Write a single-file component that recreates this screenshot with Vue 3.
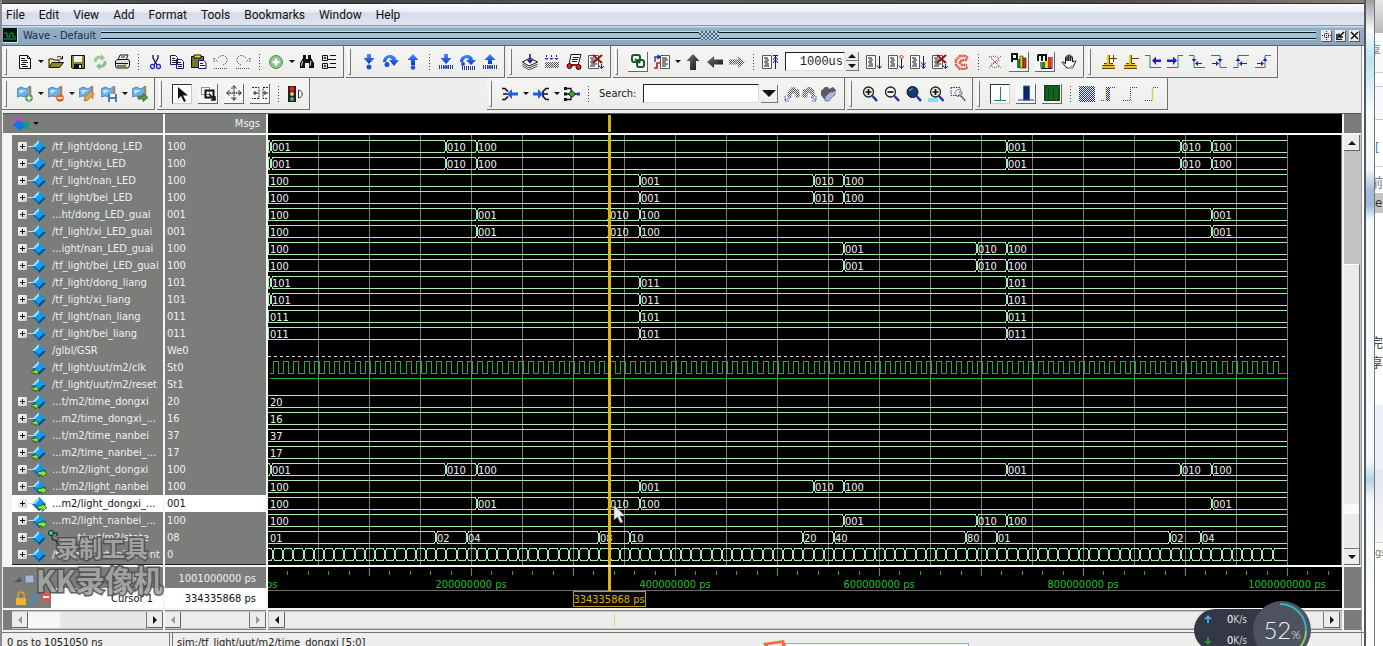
<template>
    <div class="desktop">
        <!-- Shared icon shapes -->
        <svg class="defs" width="0" height="0" aria-hidden="true">
            <defs>
                <pattern id="dots-blue" width="2" height="2" patternUnits="userSpaceOnUse"><path d="M0 0h1v1H0zM1 1h1v1H1z" fill="#1c2f78" /></pattern>
                <pattern id="dots-gray" width="2" height="2" patternUnits="userSpaceOnUse"><path d="M0 0h1v1H0zM1 1h1v1H1z" fill="#555" /></pattern>
                <linearGradient id="blue-arrow" x1="0" y1="0" x2="0" y2="1"><stop offset="0" stop-color="#4a90ff" /><stop offset="1" stop-color="#0a35c8" /></linearGradient>
                <linearGradient id="gray-arrow" x1="0" y1="0" x2="1" y2="1"><stop offset="0" stop-color="#777" /><stop offset="1" stop-color="#111" /></linearGradient>
            </defs>
            <symbol id="i-new" viewBox="0 0 16 16"><path d="M2.500 1.500h8l3 3v10h-11z" fill="#fff" stroke="#111" /><path d="M10.500 1.500v3h3" fill="none" stroke="#111" /><path d="M4 4.500h4M4 6.500h6M5 8.500h6M4 10.500h5M5 12.500h6" stroke="#111" /></symbol>
            <symbol id="i-open" viewBox="0 0 16 16"><path d="M1 13V5h4l1 1h5v3" fill="#fff27a" stroke="#111" /><path d="M1 13.500l3-5h11.500l-4 5z" fill="#8f8a1c" stroke="#111" /><path d="M9 3.500c2-2 4-1 5 1M14.500 2v3h-3" fill="none" stroke="#111" /></symbol>
            <symbol id="i-save" viewBox="0 0 16 16"><path d="M1.500 1.500h13v13h-12l-1-1z" fill="#8c8620" stroke="#111" /><path d="M4 2h8v6H4z" fill="#f3f3ee" /><path d="M4 10h8v4.500H4z" fill="#111" /><path d="M9 11h2v3H9z" fill="#eee" /></symbol>
            <symbol id="i-reload" viewBox="0 0 16 16"><path d="M2 8c-1-4 3-7 7-6V0l4 4-4 3V5C6 4 4 6 5 8z" fill="#9cc99a" /><path d="M14 7c2 4-2 7-6 7v2l-4-4 4-3v2c3 0 4-2 3-4z" fill="#8bbd8b" /></symbol>
            <symbol id="i-print" viewBox="0 0 16 16"><path d="M4 6l2-5h8l-2 5" fill="#fff" stroke="#111" /><path d="M1.500 7l2-1.500h11l1 1.500v5l-1.500 2H2.500l-1-2z" fill="#ddd" stroke="#111" /><path d="M2 9.500h12M3 12h9M7 3h4" stroke="#111" /><path d="M10 10.500h2" stroke="#d8c800" /></symbol>
            <symbol id="i-cut" viewBox="0 0 16 16"><path d="M6 1v3l4 7M11 1v3l-4 7" fill="none" stroke="#1a1a60" stroke-width="1.400" /><circle cx="5.500" cy="12.500" r="2" fill="none" stroke="#2a2ad0" stroke-width="1.300" /><circle cx="11.500" cy="12.500" r="2" fill="none" stroke="#2a2ad0" stroke-width="1.300" /></symbol>
            <symbol id="i-copy" viewBox="0 0 16 16"><path d="M1.500 1.500h5l2 2v7h-7zM7.500 5.500h5l2 2v7h-7z" fill="#fff" stroke="#15157a" /><path d="M3 4.500h3M3 6.500h4M3 8.500h4M9 8.500h3M9 10.500h4M9 12.500h4" stroke="#111" /></symbol>
            <symbol id="i-paste" viewBox="0 0 16 16"><path d="M.5 2.500h12v11H.5z" fill="#77713a" stroke="#111" /><path d="M3 1h7v3H3z" fill="#e8d84a" stroke="#111" /><path d="M7.500 6.500h5l2.500 2v6H7.500z" fill="#fff" stroke="#15157a" /><path d="M9 9.500h3M9 11.500h5" stroke="#15157a" /></symbol>
            <symbol id="i-undo" viewBox="0 0 16 16"><path d="M1 4l4 4M1 8V4M5 4c3-4 9-3 9 2 0 3-2 4-4 5" fill="none" stroke="#555" stroke-dasharray="1.500 1" /><path d="M1 14.500h14" stroke="#555" stroke-dasharray="1 1" /></symbol>
            <symbol id="i-redo" viewBox="0 0 16 16"><path d="M15 4l-4 4M15 8V4M11 4C8 0 2 1 2 6c0 3 2 4 4 5" fill="none" stroke="#555" stroke-dasharray="1.500 1" /><path d="M1 14.500h14" stroke="#555" stroke-dasharray="1 1" /></symbol>
            <symbol id="i-add" viewBox="0 0 16 16"><circle cx="8" cy="8" r="6.500" fill="#8cc587" stroke="#558f54" /><path d="M8 4.500v7M4.500 8h7" stroke="#fff" stroke-width="2.500" /></symbol>
            <symbol id="i-find" viewBox="0 0 16 16"><path d="M4 1h3v4h2V1h3v3l3 5v5h-5V9H6v5H1V9l3-5z" fill="#111" /><path d="M3.500 7L2.500 12M12 7l-1 5" stroke="#ddd" /></symbol>
            <symbol id="i-tree" viewBox="0 0 16 16"><path d="M1.500 1.500h5v5h-5zM1.500 9.500h5v5h-5z" fill="#fff" stroke="#111" /><path d="M2.500 4h3M4 2.500v3M2.500 12h3M4 10.500v3M9 1.500h6M7 5.500h8M9 9.500h6M7 13.500h8" stroke="#111" /></symbol>
            <symbol id="i-step-in" viewBox="0 0 16 16"><path d="M6 0h4v4h3.500L8 10 2.500 4H6z" fill="url(#blue-arrow)" /><circle cx="8" cy="13" r="2.500" fill="#1c4fe0" /></symbol>
            <symbol id="i-step-over" viewBox="0 0 16 16"><path d="M0 8C0-1 13-1 13 6h3l-5 6-5-6h3c-1-3-5-3-6 2z" fill="url(#blue-arrow)" /><circle cx="4" cy="10.500" r="2.500" fill="#1c4fe0" /></symbol>
            <symbol id="i-step-out" viewBox="0 0 16 16"><path d="M8 0l5.500 6H10v5H6V6H2.500z" fill="url(#blue-arrow)" /><circle cx="8" cy="13.500" r="2.300" fill="#1c4fe0" /></symbol>
            <symbol id="i-step-in-now" viewBox="0 0 16 16"><path d="M6 0h4v4h3.500L8 10 2.500 4H6z" fill="url(#blue-arrow)" /><path d="M1.500 11v4M3.500 11v4M5.500 11v4M10.500 11v4M12.500 11v4M14.500 11v4" stroke="#223a9a" /><circle cx="8" cy="13" r="2" fill="#1c4fe0" /></symbol>
            <symbol id="i-step-over-now" viewBox="0 0 16 16"><path d="M0 8C0-1 13-1 13 6h3l-5 5-5-5h3c-1-3-5-3-6 2z" fill="url(#blue-arrow)" /><circle cx="3" cy="10" r="2" fill="#1c4fe0" /><path d="M2.500 12v4M4.500 12v4M6.500 12v4M8.500 12v4M10.500 12v4M12.500 12v4M14.500 12v4" stroke="#223a9a" /></symbol>
            <symbol id="i-step-out-now" viewBox="0 0 16 16"><path d="M8 0l5.500 6H10v4H6V6H2.500z" fill="url(#blue-arrow)" /><path d="M1.500 11v4M3.500 11v4M5.500 11v4M10.500 11v4M12.500 11v4M14.500 11v4" stroke="#223a9a" /><circle cx="8" cy="13" r="2" fill="#1c4fe0" /></symbol>
            <symbol id="i-layers" viewBox="0 0 16 16"><path d="M.5 8L8 4l7.500 4L7 12z" fill="#fff" stroke="#111" /><path d="M.5 10L7 14l8.500-4M.5 12L7 16l8.500-4" fill="none" stroke="#222" stroke-width=".8" /><path d="M8 0v8M5.500 5.500L8 8.500l2.500-3" fill="none" stroke="#15158a" stroke-width="1.500" /></symbol>
            <symbol id="i-grid-down" viewBox="0 0 16 16"><path d="M2.500 1v4M7.500 1v4M12.500 1v4M1 4l1.500 2L4 4M6 4l1.500 2L9 4M11 4l1.500 2L14 4" stroke="#2424a0" fill="none" stroke-dasharray="2 1" /><path d="M1 8h14v6H1z" fill="url(#dots-gray)" /></symbol>
            <symbol id="i-profile" viewBox="0 0 16 16"><path d="M5 .5h10l-3 11H3z" fill="#fff" stroke="#111" /><path d="M7 3.500h6M6 5.500h6M6 7.500h5" stroke="#111" /><path d="M4 11h8" stroke="#a01010" stroke-width="2" /><circle cx="3.500" cy="12" r="2.500" fill="#e02020" stroke="#111" /><circle cx="12.500" cy="13" r="2.500" fill="#e02020" stroke="#111" /></symbol>
            <symbol id="i-doc-x" viewBox="0 0 16 16"><path d="M.5 1.500h10v13H.5z" fill="#fff" stroke="#555" /><path d="M2 4h4M3 6h6M2 8h4M3 10h6M2 12h5" stroke="#111" /><path d="M5 1l9 8M14 1L5 9" stroke="#8f1414" stroke-width="2" /><path d="M13.500 10v4M11 12l2.500 2.500L16 12" fill="none" stroke="#15158a" /></symbol>
            <symbol id="i-link" viewBox="0 0 16 16"><rect x="2" y="2" width="8" height="7" rx="2" fill="none" stroke="#175a2c" stroke-width="2" /><rect x="7" y="7" width="7" height="7" rx="2" fill="none" stroke="#175a2c" stroke-width="2" /><path d="M5 6l5 4" stroke="#175a2c" stroke-width="2" /></symbol>
            <symbol id="i-restart" viewBox="0 0 16 16"><path d="M6.500 1.500h9v13h-9z" fill="#fff" stroke="#555" /><path d="M8 4h5M8 6h6M8 8h4M8 10h6M8 12h4" stroke="#111" /><path d="M0 14h3V9h3" fill="none" stroke="#c02020" stroke-width="1.700" /><path d="M1 8V3h4M3.500 1L6 3 3.500 5" fill="none" stroke="#2222b0" stroke-width="1.300" /></symbol>
            <symbol id="i-up" viewBox="0 0 16 16"><path d="M8 0l6.500 7H11v9H5V7H1.500z" fill="url(#gray-arrow)" /></symbol>
            <symbol id="i-left" viewBox="0 0 16 16"><path d="M0 8l7-6v3.500h9v5H7V14z" fill="url(#gray-arrow)" /></symbol>
            <symbol id="i-right" viewBox="0 0 16 16"><path d="M16 8L9 2v3.500H0v5h9V14z" fill="url(#dots-gray)" /></symbol>
            <symbol id="i-doc-up" viewBox="0 0 16 16"><path d="M.5 1.500h9v13h-9z" fill="#fff" stroke="#555" /><path d="M2 4h4M3 6h4M2 8h4M3 10h4M2 12h5" stroke="#111" /><path d="M13.500 2v13M11 6l2.500-3L16 6M11 9l2.500-3L16 9M11 1.500h5" fill="none" stroke="#15158a" /></symbol>
            <symbol id="i-doc-down" viewBox="0 0 16 16"><path d="M.5 1.500h9v13h-9z" fill="#fff" stroke="#555" /><path d="M2 4h4M3 6h4M2 8h4M3 10h4M2 12h5" stroke="#111" /><path d="M13.500 2v12M11 11.500l2.500 3 2.500-3" fill="none" stroke="#15158a" /></symbol>
            <symbol id="i-doc-step" viewBox="0 0 16 16"><path d="M.5 1.500h9v13h-9z" fill="#fff" stroke="#555" /><path d="M2 4h4M3 6h4M2 8h4M3 10h4M2 12h5" stroke="#111" /><path d="M13.500 5v9M11 11.500l2.500 3 2.500-3" fill="none" stroke="#15158a" /><path d="M13.500 1l2 2-2 2-2-2z" fill="none" stroke="#d02020" /></symbol>
            <symbol id="i-doc-all" viewBox="0 0 16 16"><path d="M.5 1.500h9v13h-9z" fill="#fff" stroke="#555" /><path d="M2 4h4M3 6h4M2 8h4M3 10h4M2 12h5" stroke="#111" /><path d="M13.500 2v12M11 8.500l2.500 3 2.500-3M11 11.500l2.500 3 2.500-3" fill="none" stroke="#15158a" /></symbol>
            <symbol id="i-stop" viewBox="0 0 16 16"><path d="M14 4L11 2H6L2 6v5l4 4h5l3-2M13 6H8L6 8v1l2 2h5" fill="none" stroke="#e05040" stroke-width="2.500" stroke-dasharray="2 .6" /></symbol>
            <symbol id="i-trace-off" viewBox="0 0 16 16"><path d="M4 3c4-2 8 0 8 3s-8 2-8 5 5 3 8 1" fill="none" stroke="#555" stroke-dasharray="1 1" /><path d="M2 2l12 12M14 2L2 14" stroke="#b04040" stroke-dasharray="1.500 1" /></symbol>
            <symbol id="i-perf" viewBox="0 0 16 16"><path d="M6 6h3v9H6z" fill="#1c8a2a" /><path d="M9 3h3v12H9z" fill="#f0d020" stroke="#111" stroke-width=".6" /><path d="M12 5h3v10h-3z" fill="#d83018" stroke="#111" stroke-width=".6" /><path d="M1 9V1h5v5H1" fill="#fff" stroke="#111" stroke-width="2" /></symbol>
            <symbol id="i-mem" viewBox="0 0 16 16"><path d="M5 9h3v6H5z" fill="#1c8a2a" /><path d="M8 8h3v7H8z" fill="#f0d020" /><path d="M11 4h3v11h-3z" fill="#d83018" /><path d="M1 8V1.500M1 2h8v6M5 2v6" fill="none" stroke="#111" stroke-width="2" /><path d="M4 15.500h11V4M4 9v6" fill="none" stroke="#111" /></symbol>
            <symbol id="i-hand" viewBox="0 0 16 16"><path d="M4.500 10V3.500c0-1 1.500-1 1.500 0V7 2c0-1 1.800-1 1.800 0v5V1.500c0-1 1.800-1 1.800 0V7l.4-4c.3-1 1.500-.8 1.500.3L11.500 8l2-1c1-.6 1.500.2 1 1L11.500 14H6l-4.500-5C1 8 2 7.500 3 8z" fill="#fff" stroke="#111" /><path d="M6 15l6 0-1-4z" fill="#9aa8d0" /></symbol>
            <symbol id="i-cur-add" viewBox="0 0 16 16"><path d="M6 1h3v8h3v3h2v3H1v-3h2V9h3z" fill="#f0c020" /><path d="M1 14.500h13M3 9.500h3M8.500 1v8.500H12M1.500 11.500h12" fill="none" stroke="#5a4400" /><path d="M9 4.500h7M12.500 1v7" stroke="#5a4400" /></symbol>
            <symbol id="i-cur-del" viewBox="0 0 16 16"><path d="M6 1h3v8h3v3h2v3H1v-3h2V9h3z" fill="#f0c020" /><path d="M1 14.500h13M3 9.500h3M8.500 1v8.500H12M1.500 11.500h12" fill="none" stroke="#5a4400" /><path d="M9 4.500h7" stroke="#5a4400" /></symbol>
            <symbol id="i-edge-prev" viewBox="0 0 16 16"><path d="M0 1.500h5v12h11" fill="none" stroke="#2a8070" /><path d="M7 6.500l4-4v3h5v2.500h-5v3z" fill="#2a18c0" /></symbol>
            <symbol id="i-edge-next" viewBox="0 0 16 16"><path d="M0 13.500h11v-12h5" fill="none" stroke="#2a8070" /><path d="M10 6.500l-4-4v3H0v2.500h6v3z" fill="#2a18c0" /></symbol>
            <symbol id="i-fall-prev" viewBox="0 0 16 16"><path d="M0 1.500h5v12h11" fill="none" stroke="#2a8070" /><path d="M2.500 5h5L5 8zM6 9.500L9 7v5zM9 9h4v1H9z" fill="#2a18c0" /></symbol>
            <symbol id="i-fall-next" viewBox="0 0 16 16"><path d="M0 1.500h9v12h7" fill="none" stroke="#2a8070" /><path d="M6.500 5h5L9 8zM8 9.500L5 7v5zM1 9h4v1H1z" fill="#2a18c0" /></symbol>
            <symbol id="i-rise-prev" viewBox="0 0 16 16"><path d="M0 13.500h5v-12h11" fill="none" stroke="#2a8070" /><path d="M2.500 7h5L5 4zM6 9.500L9 7v5zM9 9h5v1H9z" fill="#2a18c0" /></symbol>
            <symbol id="i-rise-next" viewBox="0 0 16 16"><path d="M0 13.500h10v-12h6" fill="none" stroke="#2a8070" /><path d="M7.500 7h5L10 4zM9 9.500L6 7v5zM2 9h4v1H2z" fill="#2a18c0" /></symbol>
            <symbol id="i-flag" viewBox="0 0 16 16"><path d="M0 3l4-2 5 2 4-3v10l-4 1-5-1-4 1z" fill="#6cb0e4" stroke="#3a78b8" stroke-width=".8" /><path d="M2 4l7 0-6 4z" fill="#c4e2f8" /><path d="M13.500 0v13" stroke="#c87a30" stroke-width="1.500" /></symbol>
            <symbol id="i-bm-add" viewBox="0 0 16 16"><use href="#i-flag" /><circle cx="12" cy="12" r="3.800" fill="#5a9a48" /><path d="M12 9.500v5M9.500 12h5" stroke="#fff" stroke-width="1.500" /></symbol>
            <symbol id="i-bm-del" viewBox="0 0 16 16"><use href="#i-flag" /><circle cx="12" cy="12" r="3.800" fill="#e06428" /><path d="M9.500 12h5" stroke="#fff" stroke-width="1.500" /></symbol>
            <symbol id="i-bm-edit" viewBox="0 0 16 16"><use href="#i-flag" /><path d="M5 15l1-4 6-6 3 3-6 6z" fill="#e8a848" stroke="#a86a20" stroke-width=".8" /></symbol>
            <symbol id="i-bm-save" viewBox="0 0 16 16"><use href="#i-flag" /><path d="M7 8h9v8H7z" fill="#4a78b8" /><path d="M9 8h5v3H9zM9 13h5v3H9z" fill="#fff" /></symbol>
            <symbol id="i-bm-go" viewBox="0 0 16 16"><use href="#i-flag" /><path d="M6 10h5V7.500l5 4-5 4V13H6z" fill="#5c9450" stroke="#35682c" stroke-width=".8" /></symbol>
            <symbol id="i-pointer" viewBox="0 0 16 16"><path d="M4 1v12l3-3 3 6 2-1-3-5.500h5z" fill="#111" /></symbol>
            <symbol id="i-select" viewBox="0 0 16 16"><path d="M1.500 2.500h8v7h-8z" fill="none" stroke="#333" stroke-dasharray="1 1" /><path d="M5.500 5.500h8v7h-8z" fill="none" stroke="#111" stroke-width="2" /><path d="M9 9l6 6M15 11v4h-4" fill="none" stroke="#111" stroke-width="1.500" /></symbol>
            <symbol id="i-move" viewBox="0 0 16 16"><path d="M8 1v14M1 8h14M5.500 3.500L8 1l2.500 2.500M5.500 12.500L8 15l2.500-2.500M3.500 5.500L1 8l2.500 2.500M12.500 5.500L15 8l-2.500 2.500" fill="none" stroke="#333" stroke-width="1.300" stroke-dasharray="1.500 .7" /></symbol>
            <symbol id="i-edges" viewBox="0 0 16 16"><path d="M0 2.500h7v11H0M16 2.500h-5v11h5" fill="none" stroke="#222" stroke-dasharray="2 1" /><path d="M1 8h5M3 6v4M11 8h5M13 6v4" stroke="#222" /></symbol>
            <symbol id="i-traffic" viewBox="0 0 16 16"><path d="M1 0h8v16H1z" fill="#222" /><circle cx="5" cy="3" r="2.500" fill="#f01818" /><circle cx="5" cy="8" r="2" fill="#e0c860" /><circle cx="5" cy="13" r="2" fill="#58b078" /><path d="M11.500 4v8c5-1 5-7 0-8z" fill="#fff" stroke="#333" /></symbol>
            <symbol id="i-merge-out" viewBox="0 0 16 16"><path d="M0 2.500h3l3 3M0 13.500h3l3-3M1 8h5" fill="none" stroke="#111" stroke-width="1.700" /><path d="M5 8l5-5v3.500h6v3h-6V13z" fill="#1c60e0" /></symbol>
            <symbol id="i-merge-in" viewBox="0 0 16 16"><path d="M16 2.500h-3l-3 3v5l3 3h3M11 8h4" fill="none" stroke="#111" stroke-width="1.700" /><path d="M10 8L5 3v3.500H0v3h5V13z" fill="#1c60e0" /></symbol>
            <symbol id="i-junction" viewBox="0 0 16 16"><path d="M1 2.500h6v3M1 13.500h6v-3M0 8h16" fill="none" stroke="#111" stroke-width="1.300" /><path d="M8 4.500L11.500 8 8 11.500 4.500 8z" fill="#28b028" stroke="#111" /><path d="M0 1h3v3H0zM0 6.500h3v3H0zM0 12h3v3H0z" fill="#111" /><path d="M13 6.500h3v3h-3z" fill="#2040e0" /></symbol>
            <symbol id="i-find-prev" viewBox="0 0 16 16"><path d="M3 10l2-6 3-3h3l1 2h3l1 8-4 1-1-5-3 1-1 4-3-1z" fill="url(#dots-gray)" /><path d="M1 14l6-3M1 10v5h5" fill="none" stroke="#2c3cc0" stroke-dasharray="1.500 1" /></symbol>
            <symbol id="i-find-next" viewBox="0 0 16 16"><path d="M1 11l1-8h3l1-2h3l4 3 1 6-3 2-1-4-3-1-1 5z" fill="url(#dots-gray)" /><path d="M10 11l5 3M15 10v5h-5" fill="none" stroke="#2c3cc0" stroke-dasharray="1.500 1" /></symbol>
            <symbol id="i-find-opt" viewBox="0 0 16 16"><path d="M1 5l4-4h3l1 2 4-2 3 3-2 5-4-1-2 5H4L1 9z" fill="#5c5c5c" /><path d="M5 15l0-4 5-5 3 0 2-2 0 5-4 3-2 3z" fill="#a8b8e0" stroke="#555" stroke-width=".6" /></symbol>
            <symbol id="i-zoom-in" viewBox="0 0 16 16"><circle cx="6.500" cy="6" r="5" fill="#dff2dc" stroke="#222" stroke-width="1.300" /><path d="M6.500 3v6M3.500 6h6" stroke="#111" stroke-width="1.700" /><path d="M10.500 10l4.500 5" stroke="#2030b8" stroke-width="2.500" /></symbol>
            <symbol id="i-zoom-out" viewBox="0 0 16 16"><circle cx="6.500" cy="6" r="5" fill="#f4f8f4" stroke="#222" stroke-width="1.300" /><path d="M3.500 6h6" stroke="#111" stroke-width="1.700" /><path d="M10.500 10l4.500 5" stroke="#2030b8" stroke-width="2.500" /></symbol>
            <symbol id="i-zoom-full" viewBox="0 0 16 16"><circle cx="6.500" cy="6" r="5.500" fill="#163a78" stroke="#111" /><path d="M3.500 5c1-2 2-2 3-2" stroke="#a8c8e8" fill="none" /><path d="M10.500 10l4.500 5" stroke="#2030b8" stroke-width="2.500" /></symbol>
            <symbol id="i-zoom-cur" viewBox="0 0 16 16"><path d="M0 12h10v4H0z" fill="#80e0f0" /><circle cx="7.500" cy="6" r="5" fill="#dff2dc" stroke="#222" stroke-width="1.300" /><path d="M7.500 3v6M4.500 6h6" stroke="#111" stroke-width="1.700" /><path d="M11 10l4.500 5" stroke="#2030b8" stroke-width="2.500" /></symbol>
            <symbol id="i-zoom-sel" viewBox="0 0 16 16"><path d="M1 1.500h9v8H1z" fill="none" stroke="#2030b8" stroke-dasharray="1.500 1" /><circle cx="8.500" cy="7" r="3.500" fill="none" stroke="#444" stroke-dasharray="1.500 1" /><path d="M11 10l4.500 5" stroke="#404070" stroke-width="2" stroke-dasharray="1.500 .8" /></symbol>
            <symbol id="i-wave-line" viewBox="0 0 16 16"><path d="M8.500 1v14M2 14.500h12" stroke="#28806c" /></symbol>
            <symbol id="i-wave-blue" viewBox="0 0 16 16"><path d="M5.500 1h6v14h-6z" fill="#14206a" stroke="#28806c" /><path d="M0 15h16" stroke="#2030b8" /></symbol>
            <symbol id="i-wave-green" viewBox="0 0 16 16"><path d="M0 0h16v16H0z" fill="#0a4a14" /><path d="M1 14h2V2h3v12h2V2h3v12h2V2h2" fill="none" stroke="#1e7a30" /></symbol>
            <symbol id="i-fill" viewBox="0 0 16 16"><path d="M0 0h16v16H0z" fill="url(#dots-blue)" /></symbol>
            <symbol id="i-edge-fill" viewBox="0 0 16 16"><path d="M5 1h4v14H5z" fill="url(#dots-blue)" /><path d="M0 14.500h5M9 1.500h6" stroke="#444" stroke-dasharray="1 1" /><path d="M4.500 3v12" stroke="#e8e070" /></symbol>
            <symbol id="i-edge-dot" viewBox="0 0 16 16"><path d="M0 14.500h7.500v-13H14" fill="none" stroke="#444" stroke-dasharray="1 1" /></symbol>
            <symbol id="i-edge-yellow" viewBox="0 0 16 16"><path d="M0 14.500h7M8 1.500h6" fill="none" stroke="#444" stroke-dasharray="1 1" /><path d="M7.500 2v13" stroke="#d8d040" stroke-width="1.500" /></symbol>
            <symbol id="i-signal" viewBox="0 0 16 16"><path d="M8 1l7 7-7 7-7-7z" fill="#10a0f0" /><path d="M8 1L1 8h3l4-4z" fill="#9fe0ff" /><path d="M8 1l7 7h-3L8 4z" fill="#2090d8" /><path d="M15 8l-7 7v-3l4-4z" fill="#0c4880" /><path d="M1 8l7 7v-3L4 8z" fill="#1070b8" /></symbol>
            <symbol id="i-signal-in" viewBox="0 0 16 16"><use href="#i-signal" /><path d="M1 10.500h3V8.500L8 12l-4 3v-2H1z" fill="#8ee048" stroke="#1e5a10" stroke-width=".8" /></symbol>
            <symbol id="i-signal-out" viewBox="0 0 16 16"><use href="#i-signal" /><path d="M7 9.500h4V7.500l5 4-5 4v-2.500H7z" fill="#8ee048" stroke="#1e5a10" stroke-width=".8" /></symbol>
        </svg>

        <main class="window">
            <div class="glass-top"></div>
            <nav class="menubar">
                <a v-for="m in menus" :key="m" href="#" class="menu">{{ m }}</a>
            </nav>

            <header class="titlebar">
                <svg class="title-icon" width="14" height="14" viewBox="0 0 14 14"><path d="M0 0h14v14H0z" fill="#06140c" /><path d="M1 5h3v4h3V5M8 5h2v4h3M1 11h12" fill="none" stroke="#18a060" /></svg>
                <h1>Wave - Default</h1>
                <div class="stripes"><span class="stripe-grip"></span></div>
                <button class="title-btn" aria-label="Zoom window"><svg width="9" height="9" viewBox="0 0 9 9"><path d="M4.500 0v9M0 4.500h9M2.500 2.500h4v4h-4z" fill="none" stroke="#222" stroke-dasharray="1 1" /></svg></button>
                <button class="title-btn" aria-label="Undock"><svg width="9" height="9" viewBox="0 0 9 9"><path d="M1 3v5.500h5M8 1L3.500 5.500M3 2.500v3.500h4" fill="none" stroke="#111" stroke-width="1.600" /></svg></button>
                <button class="title-btn" aria-label="Close"><svg width="9" height="9" viewBox="0 0 9 9"><path d="M1 1l7 7M8 1L1 8" stroke="#111" stroke-width="1.600" /></svg></button>
            </header>

            <!-- Toolbars -->
            <div v-for="(row, r) in toolbars" :key="r" class="toolbar-row">
                <div v-for="bar in row" :key="bar.id" class="toolbar" :class="bar.id">
                    <span class="grip"></span>
                    <template v-for="(item, i) in bar.items" :key="i">
                        <span v-if="item === '|'" class="sep"></span>
                        <button v-else-if="item === 'v'" class="caret" aria-label="More"></button>
                        <div v-else-if="item === 'runlength'" class="run-length">
                            <input v-model="runLength" type="text" aria-label="Run length" />
                            <div class="spin">
                                <button aria-label="Increase"><i class="tri up"></i></button>
                                <button aria-label="Decrease"><i class="tri down"></i></button>
                            </div>
                        </div>
                        <div v-else-if="item === 'search'" class="search">
                            <label for="wave-search">Search:</label>
                            <input id="wave-search" v-model="search" type="text" />
                            <button class="drop" aria-label="Search history"><i class="tri down big"></i></button>
                        </div>
                        <button v-else class="tool" :class="item.kind" :aria-label="item.icon || item">
                            <svg width="16" height="16"><use :href="'#i-' + (item.icon || item)" /></svg>
                        </button>
                    </template>
                </div>
            </div>

            <!-- Wave panes -->
            <section class="panes">
                <div class="head names-head">
                    <svg width="18" height="16" viewBox="0 0 18 16"><path d="M2 5l6-4 4 5-5 4z" fill="none" stroke="#d040d8" stroke-width="2" /><path d="M9 5h8v8H9z" fill="#1c9a70" /><path d="M1 9l5-5 7 6-5 5z" fill="#1870f0" /></svg>
                    <button class="caret" aria-label="Columns"></button>
                </div>
                <div class="head msgs-head">Msgs</div>
                <div class="head wave-head"><svg width="100%" height="19"><rect :x="cursorX - 1" y="1" width="3" height="17" fill="#c8b018" /></svg></div>
                <div class="head"></div>

                <ul class="names">
                    <li v-for="(s, i) in signals" :key="i" :class="{ selected: i === selected }">
                        <button v-if="s.bus" class="expand" aria-label="Expand"></button>
                        <span v-else class="no-expand"></span>
                        <svg class="sig-icon" width="16" height="16"><use :href="'#i-signal' + (s.dir ? '-' + s.dir : '')" /></svg>
                        <svg v-if="s.fsm" class="fsm" width="14" height="15" viewBox="0 0 14 15"><path d="M4 3h5v3M4 5v4l6 3" fill="none" stroke="#111" /><circle cx="3" cy="3" r="2.500" fill="#30d8d8" stroke="#111" /><circle cx="11" cy="12" r="2.500" fill="#30d8d8" stroke="#111" /></svg>
                        <span class="sig-name">{{ s.name }}</span>
                    </li>
                </ul>
                <ul class="values">
                    <li v-for="(s, i) in signals" :key="i" :class="{ selected: i === selected }">{{ s.value }}</li>
                </ul>
                <div class="waves">
                    <svg width="100%" height="430" shape-rendering="crispEdges">
                        <path :d="gridPath" stroke="#7c7c7c" fill="none" />
                        <path :d="busPath" stroke="#aeeab0" fill="none" />
                        <path d="M0 221.500H1019" stroke="#dcdcdc" stroke-dasharray="3 3" />
                        <path :d="clockPath" stroke="#1fae2c" fill="none" />
                        <path d="M2 243.500H1019" stroke="#1fae2c" />
                        <text v-for="(l, i) in labels" :key="i" :x="l.x" :y="l.y" class="bus-label">{{ l.text }}</text>
                        <rect :x="cursorX - 1" y="0" width="3" height="430" fill="#dcb414" />
                    </svg>
                    <svg class="mouse" width="13" height="20" viewBox="0 0 13 20"><path d="M1 1v15l3.500-3 3 6 2.500-1-3-6h5z" fill="#eceaf0" stroke="#777" stroke-width=".6" /></svg>
                </div>
                <div class="vscroll">
                    <button class="sb" aria-label="Scroll up"><i class="tri up"></i></button>
                    <div class="vtrack"></div>
                    <div class="vthumb"></div>
                    <button class="sb" aria-label="Scroll down"><i class="tri down"></i></button>
                </div>

                <div class="foot names-foot">
                    <div class="foot-row now">
                        <svg width="40" height="16" viewBox="0 0 40 16"><path d="M0 11h9l-2-5-3 3z" fill="#444" /><path d="M12 4h9v8h-9z" fill="#bcd0f0" stroke="#5070b0" /><circle cx="31" cy="9" r="4" fill="#88b488" /></svg>
                        <span>Now</span>
                    </div>
                    <div class="foot-row cursor">
                        <svg width="40" height="16" viewBox="0 0 40 16"><path d="M5 8V5c0-4 6-4 6 0v3" fill="none" stroke="#d8a030" stroke-width="1.500" /><path d="M3 8h10v7H3z" fill="#f0b040" /><path d="M15 14l6-7c0-3 2-5 4-4l-2 2 1 2 2-1c0 3-2 3-4 3l-5 6z" fill="#4a88d0" /><circle cx="33" cy="7" r="5" fill="#e05848" /><path d="M30 7h6" stroke="#fff" stroke-width="2" /></svg>
                        <span>Cursor 1</span>
                    </div>
                </div>
                <div class="foot values-foot">
                    <div class="foot-row now">1001000000 ps</div>
                    <div class="foot-row cursor">334335868 ps</div>
                </div>
                <div class="foot timeline">
                    <svg width="100%" height="41">
                        <g shape-rendering="crispEdges">
                            <path :d="tickPath" stroke="#18b428" fill="none" />
                            <path d="M0 23.500H1072" stroke="#6c6c6c" />
                            <rect :x="cursorX - 1" y="0" width="3" height="24" fill="#dcb414" />
                            <rect x="305.500" y="24.500" width="72" height="15" fill="#0c0a00" stroke="#b8a018" />
                        </g>
                        <text v-for="t in times" :key="t.text" :x="t.x" y="21" class="time-label">{{ t.text }}</text>
                        <text :x="cursorX" y="36" class="cursor-label">334335868 ps</text>
                    </svg>
                </div>
                <div class="foot"></div>

                <div v-for="bar in hbars" :key="bar" class="hscroll" :class="bar">
                    <button class="sb" aria-label="Scroll left"><i class="tri left"></i></button>
                    <div class="hthumb"></div>
                    <button class="sb" aria-label="Scroll right"><i class="tri right"></i></button>
                </div>
                <div class="head"></div>
            </section>

            <footer class="status">
                <span class="range">0 ps to 1051050 ns</span>
                <span class="path">sim:/tf_light/uut/m2/time_dongxi [5:0]</span>
            </footer>
        </main>

        <div class="glass-side"></div>
        <aside class="behind">
            <div class="b-tab"></div>
            <div class="b-link">享</div>
            <div class="b-band"></div>
            <div class="b-blue">[</div>
            <div class="b-gray">前</div>
            <div class="b-pill">e</div>
            <div class="b-text">完</div>
            <div class="b-text">享</div>
            <div class="b-empty"></div>
            <div class="b-code">gs</div>
        </aside>

        <!-- Recorder watermark -->
        <div class="watermark" aria-hidden="true">
            <span class="wm-small">录制工具</span>
            <span class="wm-large">KK录像机</span>
        </div>

        <div class="popup"><svg width="24" height="7" viewBox="0 0 24 7"><path d="M0 3l21-3 2 7H2z" fill="#f07038" /><path d="M5 5l14-2v4H5z" fill="#fbe8d8" /></svg></div>

        <!-- Network speed widget -->
        <div class="speed">
            <div class="speed-pill">
                <div><svg width="8" height="9" viewBox="0 0 8 9"><path d="M4 0l4 4H5v4H3V4H0z" fill="#4aa4e0" /></svg><b>0</b><span>K/s</span></div>
                <div><svg width="8" height="9" viewBox="0 0 8 9"><path d="M4 9L0 5h3V1h2v4h3z" fill="#1c9a40" /></svg><b>0</b><span>K/s</span></div>
            </div>
            <div class="speed-ball">
                <svg width="60" height="60" viewBox="0 0 60 60"><circle cx="30" cy="30" r="29" fill="#4c525e" /><path d="M28 4a26 26 0 0 1 26 27" fill="none" stroke="#34b4b4" stroke-width="2" /><path d="M54 31a26 26 0 0 1-6 16" fill="none" stroke="#90c870" stroke-width="2" /></svg>
                <p>52<small>%</small></p>
            </div>
        </div>
    </div>
</template>

<script setup>
import { ref } from 'vue';

const menus = ['File', 'Edit', 'View', 'Add', 'Format', 'Tools', 'Bookmarks', 'Window', 'Help'];
const runLength = ref('1000us');
const search = ref('');
const selected = ref(21);
const hbars = ['h-names', 'h-values', 'h-waves'];

const raised = icon => ({ icon, kind: 'raised' });
const sunken = icon => ({ icon, kind: 'sunken' });
const small  = icon => ({ icon, kind: 'small' });

const toolbars = [
    [
        { id: 'standard', items: ['new', 'v', 'open', 'save', 'reload', 'print', '|', 'cut', 'copy', 'paste', 'undo', 'redo', '|', 'add', 'v', 'find', 'tree'] },
        { id: 'step', items: ['step-in', 'step-over', 'step-out', '|', 'step-in-now', 'step-over-now', 'step-out-now'] },
        { id: 'compile', items: ['layers', 'grid-down', 'profile', 'doc-x'] },
        { id: 'simulate', items: [raised('link'), 'restart', 'v', 'up', 'left', 'right', '|', 'doc-up', 'runlength', 'doc-down', 'doc-step', 'doc-all', 'doc-x', 'stop', '|', 'trace-off', raised('perf'), raised('mem'), 'hand'] },
        { id: 'edges', items: ['cur-add', 'cur-del', 'edge-prev', 'edge-next', 'fall-prev', 'fall-next', 'rise-prev', 'rise-next'] },
    ],
    [
        { id: 'bookmarks', items: ['bm-add', 'v', 'bm-del', 'v', 'bm-edit', 'bm-save', 'v', 'bm-go'] },
        { id: 'mode', items: [sunken('pointer'), raised('select'), raised('move'), raised('edges'), '|', 'traffic'] },
        { id: 'finder', items: ['merge-out', 'v', 'merge-in', 'v', 'junction', '|', 'search', small('find-prev'), small('find-next'), 'find-opt'] },
        { id: 'zoom', items: ['zoom-in', 'zoom-out', 'zoom-full', 'zoom-cur', 'zoom-sel'] },
        { id: 'expand-time', items: [sunken('wave-line'), raised('wave-blue'), raised('wave-green'), '|', 'fill', 'edge-fill', 'edge-dot', 'edge-yellow'] },
    ],
];

// [x, label] pairs; x is where the value starts in the wave pane
const dongxi     = [[3, '001'], [178, '010'], [209, '100'], [739, '001'], [913, '010'], [944, '100']];
const nanbei     = [[0, '100'], [372, '001'], [546, '010'], [576, '100']];
const dongxiTurn = [[0, '100'], [209, '001'], [341, '010'], [372, '100'], [944, '001']];
const nanbeiTurn = [[0, '100'], [576, '001'], [709, '010'], [739, '100']];
const lightA     = [[3, '101'], [372, '011'], [739, '101']];
const lightB     = [[0, '011'], [372, '101'], [739, '011']];
const state      = [[0, '01'], [168, '02'], [199, '04'], [331, '08'], [362, '10'], [535, '20'], [566, '40'], [698, '80'], [729, '01'], [902, '02'], [933, '04']];

const signals = [
    { name: '/tf_light/dong_LED',      value: '100', bus: dongxi },
    { name: '/tf_light/xi_LED',        value: '100', bus: dongxi },
    { name: '/tf_light/nan_LED',       value: '100', bus: nanbei },
    { name: '/tf_light/bei_LED',       value: '100', bus: nanbei },
    { name: '...ht/dong_LED_guai',     value: '001', bus: dongxiTurn },
    { name: '/tf_light/xi_LED_guai',   value: '001', bus: dongxiTurn },
    { name: '...ight/nan_LED_guai',    value: '100', bus: nanbeiTurn },
    { name: '/tf_light/bei_LED_guai',  value: '100', bus: nanbeiTurn },
    { name: '/tf_light/dong_liang',    value: '101', bus: lightA },
    { name: '/tf_light/xi_liang',      value: '101', bus: lightA },
    { name: '/tf_light/nan_liang',     value: '011', bus: lightB },
    { name: '/tf_light/bei_liang',     value: '011', bus: lightB },
    { name: '/glbl/GSR',               value: 'We0' },
    { name: '/tf_light/uut/m2/clk',    value: 'St0', dir: 'in' },
    { name: '/tf_light/uut/m2/reset',  value: 'St1', dir: 'in' },
    { name: '...t/m2/time_dongxi',     value: '20', dir: 'in', bus: [[0, '20']] },
    { name: '...m2/time_dongxi_...',   value: '16', dir: 'in', bus: [[0, '16']] },
    { name: '...t/m2/time_nanbei',     value: '37', dir: 'in', bus: [[0, '37']] },
    { name: '...m2/time_nanbei_...',   value: '17', dir: 'in', bus: [[0, '17']] },
    { name: '...t/m2/light_dongxi',    value: '100', dir: 'out', bus: dongxi },
    { name: '...t/m2/light_nanbei',    value: '100', dir: 'out', bus: nanbei },
    { name: '...m2/light_dongxi_...',  value: '001', dir: 'out', bus: dongxiTurn },
    { name: '...m2/light_nanbei_...',  value: '100', dir: 'out', bus: nanbeiTurn },
    { name: '...t/uut/m2/state',       value: '08', fsm: true, bus: state },
    { name: '/tf_light/uut/m2/count',  value: '0', bus: [] },
];

// 100 clock periods fill the recorded time
const END = 1019;
const PERIOD = 10.2;
const cursorX = 341;

const periods = Array.from({ length: 100 }, (_, n) => Math.round(5 + n * PERIOD)).filter(x => x < END - 5);

function bus(xs, top) {
    const t = top + 0.5;
    const b = top + 12.5;
    let d = '';
    let from = 0;
    xs.filter(x => x > 0).concat(END + 1).forEach(x => {
        d += `M${from} ${t}H${x - 1}M${from} ${b}H${x - 1}`;
        if (x < END) {
            d += `M${x - 1.5} ${t}l1 3v6l-1 3M${x + 1.5} ${t}l-1 3v6l1 3`;
        }
        from = x + 1;
    });
    return d;
}

const busPath = signals.map((s, i) => {
    if (!s.bus) return '';
    const start = i < 12 ? `M.5 ${6 + i * 17}v12` : '';
    return bus(s.bus.length ? s.bus.map(v => v[0]) : periods, 5 + i * 17) + start;
}).join('');

const labels = signals.flatMap((s, i) => (s.bus || []).map(([x, text]) => ({
    x: x ? x + 1 : 2, y: 16 + i * 17, text,
})));

const clockPath = 'M2 238.500' + periods.map(x => `H${x + 0.5}V226.500h5V238.500`).join('') + `H${END}`;

const gridPath = Array.from({ length: 20 }, (_, n) => `M${Math.round((n + 1) * 51) - 0.5} 0V430`).join('');

const tickPath = Array.from({ length: 53 }, (_, n) => {
    const x = Math.round(n * 20.4) - 0.5;
    return n % 5 === 0 ? `M${x} 1v8` : `M${x} 4v4`;
}).join('');

const times = [0, 1, 2, 3, 4, 5].map(n => ({
    x: n * 204 - 1,
    text: n ? `${n * 200000000} ps` : '0 ps',
}));
</script>

<style>
html,
body {
    margin: 0;
    height: 100%;
    overflow: hidden;
}
</style>

<style scoped>
.desktop {
    position: relative;
    display: flex;
    height: 100vh;
    overflow: hidden;
    font-family: "DejaVu Sans Condensed", "DejaVu Sans", "Noto Sans CJK SC", sans-serif;
    font-size: 11px;
    line-height: 17px;
    color: #1a1a1a;
}
.defs {
    position: absolute;
}
button {
    padding: 0;
    border: 0;
    background: none;
    font: inherit;
}

/* ─── Window ─────────────────────────────────── */
.window {
    flex: 1;
    min-width: 0;
    display: flex;
    flex-direction: column;
    background: #eeeeec;
    border-left: 2px solid #8c8c90;
    border-right: 2px solid #55585c;
    box-shadow: inset -2px 0 #fff, inset -3px 0 #9a9a9a;
}
.glass-top {
    height: 4px;
    flex: none;
    background: linear-gradient(90deg, #5a5a58, #3c4048 20%, #55585a 50%, #484848 80%, #8c8078);
    border-bottom: 1px solid #2c2c2c;
    box-sizing: border-box;
}
.menubar {
    display: flex;
    gap: 14px;
    height: 22px;
    flex: none;
    padding-left: 4px;
    background: linear-gradient(#fbfbfe, #eceef6 35%, #d6dbe9 45%, #e0e4f0);
    border-bottom: 1px solid #8e98a8;
    box-sizing: border-box;
    font-family: Roboto, "Open Sans", sans-serif;
    font-size: 12px;
    line-height: 22px;
}
.menu {
    color: #111;
    text-decoration: none;
}
.titlebar {
    display: flex;
    align-items: center;
    height: 20px;
    flex: none;
    gap: 5px;
    padding: 0 6px 0 1px;
    background: linear-gradient(#c8dce8 1px, #94afc6 2px, #8aa6c0);
    border-bottom: 1px solid #5a6470;
    box-sizing: border-box;
}
.title-icon {
    border: 1px solid #dfe8f0;
    border-width: 0 1px 1px 0;
}
h1 {
    margin: 0;
    font-size: 11px;
    font-weight: 400;
    color: #1c2c3c;
}
.stripes {
    flex: 1;
    height: 7px;
    display: flex;
    justify-content: center;
    border-top: 1px solid #0c1418;
    border-bottom: 1px solid #0c1418;
    background: #9cc4d8;
    box-sizing: border-box;
    box-shadow: 0 -1px #c0e0f0, 0 1px #c0e0f0;
}
.stripe-grip {
    width: 20px;
    height: 9px;
    margin-top: -2px;
    background: repeating-conic-gradient(#4c6880 0 25%, #b8d0e0 0 50%) 0 0 / 4px 4px;
}
.title-btn {
    width: 10px;
    height: 11px;
    margin-right: -1px;
    display: grid;
    place-items: center;
    background: #ececec;
    box-shadow: 1px 1px #555;
}

/* ─── Toolbars ───────────────────────────────── */
.toolbar-row {
    display: flex;
    gap: 2px;
    height: 32px;
    flex: none;
}
.toolbar {
    display: flex;
    align-items: center;
    padding-right: 3px;
    background: linear-gradient(#f5f5f4, #ececea);
    border-right: 1px solid #707070;
    border-bottom: 1px solid #707070;
}
.finder {
    margin-left: 175px;
    padding-right: 5px;
}
.grip {
    width: 3px;
    height: 26px;
    margin: 0 7px 0 2px;
    border-right: 1px solid #777;
    border-bottom: 1px solid #777;
    border-left: 1px solid #fff;
    box-sizing: border-box;
    flex: none;
}
.sep {
    width: 1px;
    height: 16px;
    margin: 0 5px;
    background: repeating-linear-gradient(#444 0 1px, transparent 1px 3px);
}
.tool {
    width: 22px;
    height: 22px;
    display: grid;
    place-items: center;
}
.tool.small {
    width: 17px;
}
.tool.raised,
.tool.sunken {
    width: 20px;
    height: 20px;
    margin: 0 3px;
    background: #f6f6f4;
    border-right: 1px solid #666;
    border-bottom: 1px solid #666;
    box-sizing: border-box;
}
.tool.sunken {
    background: #fff;
    border: 1px solid #333;
    border-right-color: #ccc;
    border-bottom-color: #ccc;
}
.caret {
    width: 9px;
    height: 16px;
    display: grid;
    place-items: center;
}
.caret::before {
    content: "";
    border: 3px solid transparent;
    border-top-color: #111;
    border-bottom: 0;
}
input {
    border: 1px solid #ddd;
    border-top-color: #222;
    border-left-color: #222;
    border-radius: 0;
    background: #fff;
    box-sizing: border-box;
    height: 19px;
    padding: 0 1px;
    outline: 0;
    color: #222;
}
.run-length {
    display: flex;
    gap: 1px;
    margin: 0 4px;
}
.run-length input {
    width: 60px;
    text-align: right;
    font-family: "Liberation Mono", monospace;
    font-size: 12px;
}
.spin {
    display: flex;
    flex-direction: column;
    gap: 1px;
}
.spin button {
    width: 13px;
    flex: 1;
    display: grid;
    place-items: center;
    background: #ececea;
    border-right: 1px solid #777;
    border-bottom: 1px solid #777;
}
.search {
    display: flex;
    align-items: center;
    margin: 0 5px 0 5px;
}
.search label {
    width: 44px;
}
.search input {
    width: 116px;
}
.drop {
    width: 17px;
    height: 18px;
    margin-left: 2px;
    display: grid;
    place-items: center;
    border-right: 1px solid #777;
    border-bottom: 1px solid #777;
}
.tri {
    display: block;
    border: 4px solid transparent;
}
.tri.up { border-bottom-color: #111; border-top: 0; }
.tri.down { border-top-color: #111; border-bottom: 0; }
.tri.left { border-right-color: #111; border-left: 0; }
.tri.right { border-left-color: #111; border-right: 0; }
.tri.big { border-width: 7px 7px 0; }

/* ─── Panes ──────────────────────────────────── */
.panes {
    display: grid;
    grid-template-columns: 160px 101px 1fr 17px;
    grid-template-rows: 19px 430px 41px 20px;
    gap: 2px;
    flex: none;
    margin: 3px 3px 0 1px;
    border-top: 1px solid #555;
    background: #f6f6f4;
    color: #f0f0f0;
}
.head {
    display: flex;
    align-items: center;
    background: #7b7d7b;
}
.names-head {
    padding-left: 9px;
    gap: 1px;
}
.msgs-head {
    justify-content: flex-end;
    padding-right: 6px;
}
.wave-head {
    background: #000;
}
ul {
    margin: 0;
    padding: 3px 0 0;
    list-style: none;
    background: #7b7d7b;
    box-shadow: inset 0 -1px #222;
}
li {
    display: flex;
    align-items: center;
    height: 17px;
    white-space: nowrap;
}
.names {
    border-left: 9px solid #f4f6f4;
    overflow: hidden;
}
.names li {
    padding-left: 6px;
}
.values li {
    padding-left: 2px;
}
li.selected {
    background: #fff;
    color: #111;
}
.expand,
.no-expand {
    position: relative;
    width: 9px;
    height: 9px;
    flex: none;
}
.expand {
    background: linear-gradient(#111, #111) 50% 50% / 5px 1px no-repeat, linear-gradient(#111, #111) 50% 50% / 1px 5px no-repeat, linear-gradient(135deg, #fff, #c8c8d4);
    border-radius: 1px;
}
.expand::after {
    content: "";
    position: absolute;
    left: 10px;
    top: 4px;
    width: 5px;
    height: 1px;
    background: #d8d8d8;
}
.sig-icon {
    margin: 0 5px 0 4px;
    flex: none;
}
.fsm {
    margin: 0 6px 0 -4px;
    flex: none;
}
.waves {
    position: relative;
    background: #000;
    overflow: hidden;
    box-shadow: inset -1px 0 #777;
}
.waves > svg,
.timeline > svg,
.wave-head > svg {
    display: block;
}
.bus-label {
    fill: #f0f0f0;
}
.mouse {
    position: absolute;
    left: 345px;
    top: 369px;
}
.vscroll {
    display: flex;
    flex-direction: column;
    background: #c3c4c2;
}
.sb {
    width: 16px;
    height: 16px;
    flex: none;
    display: grid;
    place-items: center;
    background: #ececea;
    border-right: 1px solid #666;
    border-bottom: 1px solid #666;
    box-sizing: border-box;
}
.vtrack {
    flex: 114;
}
.vthumb {
    flex: 284;
    margin-right: 1px;
    background: linear-gradient(#ebecea 239px, #fafafa 239px 249px, #ebecea 249px);
    border-right: 1px solid #777;
    border-top: 1px solid #fff;
    border-bottom: 1px solid #777;
}
.foot {
    background: #7b7d7b;
    overflow: hidden;
}
.foot-row {
    display: flex;
    align-items: center;
    justify-content: flex-end;
    height: 20px;
    padding-right: 10px;
}
.foot-row.now {
    padding-top: 2px;
    height: 21px;
    box-sizing: border-box;
}
.foot-row svg {
    margin: 0 auto 0 10px;
}
.names-foot .now svg {
    opacity: .7;
}
.foot-row.cursor {
    background: #fff;
    color: #111;
}
.names-foot .cursor {
    background: linear-gradient(90deg, #7b7d7b 48px, #fff 48px);
}
.timeline {
    background: #000;
}
.time-label {
    fill: #18c028;
    text-anchor: middle;
}
.cursor-label {
    fill: #d0b020;
    text-anchor: middle;
}
.hscroll {
    display: flex;
    align-items: center;
    background: #c3c4c2;
    border-bottom: 1px solid #888;
    border-top: 1px solid #888;
    box-sizing: border-box;
}
.hthumb {
    flex: 1;
    height: 16px;
    background: #ececea;
    border-right: 1px solid #777;
    box-sizing: border-box;
}
.h-names {
    border-left: 9px solid #7b7d7b;
}
.h-names .hthumb {
    background: linear-gradient(90deg, #f6f6f6 32px, #e6e8e6 32px);
}
.h-waves {
    padding: 0 2px 0 1px;
}
.h-waves .hthumb {
    background: linear-gradient(#dcdc70, #dcdc70) 329px 50% / 1px 12px no-repeat, #ececea;
}
.h-values .tri.left,
.h-names .tri.left {
    border-right-color: #999;
}
.h-values .tri.right {
    border-left-color: #999;
}

/* ─── Status bar ─────────────────────────────── */
.status {
    display: flex;
    gap: 2px;
    flex: 1 0 20px;
    margin-top: 2px;
    border-top: 1px solid #777;
    line-height: 19px;
}
.range {
    width: 162px;
    padding-left: 5px;
    border-right: 1px solid #777;
}
.path {
    flex: 1;
    margin-right: 50px;
    padding-left: 4px;
    border-left: 1px solid #777;
}

/* ─── Behind the window ──────────────────────── */
.glass-side {
    width: 8px;
    background: linear-gradient(#a0a0a0, #f4fafc 30px, #b8e4f0 60px, #f8fcfd 110px, #f0f8fa 170px, #a4bedc 190px, #a0bcd8 205px, #f4fafc 220px, #f4fafc 460px, #b4d4ec 480px, #f4fafc 500px, #fff);
    border-right: 1px solid #777;
}
.behind {
    width: 8px;
    overflow: hidden;
    background: #fff;
    font-size: 13px;
    line-height: 20px;
    color: #777;
    white-space: nowrap;
}
.b-tab { height: 33px; background: linear-gradient(#e8e8e8, #b8b8b8); }
.b-link { padding: 8px 0 11px; color: #3a94cc; background: #fafafa; border-bottom: 1px solid #ccc; text-indent: -7px; }
.b-band { height: 32px; margin-top: 13px; background: #f7f8fc; border: 1px solid #bcc8e0; border-width: 1px 0; }
.b-blue { margin-top: 18px; padding-bottom: 8px; color: #3a80d0; border-bottom: 1px solid #ccc; }
.b-gray { margin-top: 6px; text-indent: -5px; }
.b-pill { background: #c4c4c4; color: #333; }
.b-text { color: #444; text-indent: -5px; }
.b-pill + .b-text { margin-top: 120px; }
.b-empty { height: 165px; margin-top: 4px; background: linear-gradient(#fff 27px, #eef0f8 28px 92px, #e4e6ee 93px, #f6f6f8); border-bottom: 1px solid #ccc; }
.b-code { font-size: 11px; }

/* ─── Overlays ───────────────────────────────── */
.watermark {
    position: absolute;
    left: 36px;
    top: 534px;
    display: flex;
    flex-direction: column;
    font-family: "Noto Sans CJK SC", sans-serif;
    font-weight: 700;
    color: #a4a4a4;
    -webkit-text-stroke: 3px #505050;
    paint-order: stroke fill;
    opacity: .9;
}
.wm-small {
    padding-left: 20px;
    font-size: 23px;
    line-height: 27px;
}
.wm-large {
    font-size: 29px;
    line-height: 36px;
}
.popup {
    position: absolute;
    left: 763px;
    bottom: 0;
    width: 206px;
    height: 6px;
}
.popup::after {
    content: "";
    position: absolute;
    left: 22px;
    right: 0;
    bottom: 0;
    height: 2px;
    border: 1px solid #90a8c0;
    border-bottom: 0;
    background: #f8fafc;
}
.popup svg {
    display: block;
}
.speed {
    position: absolute;
    right: 71px;
    top: 600px;
    width: 118px;
    height: 60px;
}
.speed-pill {
    width: 90px;
    height: 42px;
    margin-top: 9px;
    border-radius: 21px 0 0 21px;
    background: #343844;
    color: #d0d4dc;
    font-size: 10px;
}
.speed-pill div {
    display: flex;
    align-items: center;
    height: 21px;
    padding-left: 10px;
}
.speed-pill svg {
    margin-right: 15px;
}
.speed-pill b {
    font-size: 11px;
    font-weight: 400;
    color: #fff;
}
.speed-ball {
    position: absolute;
    right: 0;
    top: 0;
    width: 60px;
    height: 60px;
}
.speed-ball p {
    position: absolute;
    inset: 0;
    margin: 0;
    text-align: center;
    font-family: Lato, Roboto, sans-serif;
    font-weight: 300;
    font-size: 24px;
    line-height: 60px;
    color: #f0f2f4;
}
.speed-ball small {
    font-size: 12px;
}
</style>
